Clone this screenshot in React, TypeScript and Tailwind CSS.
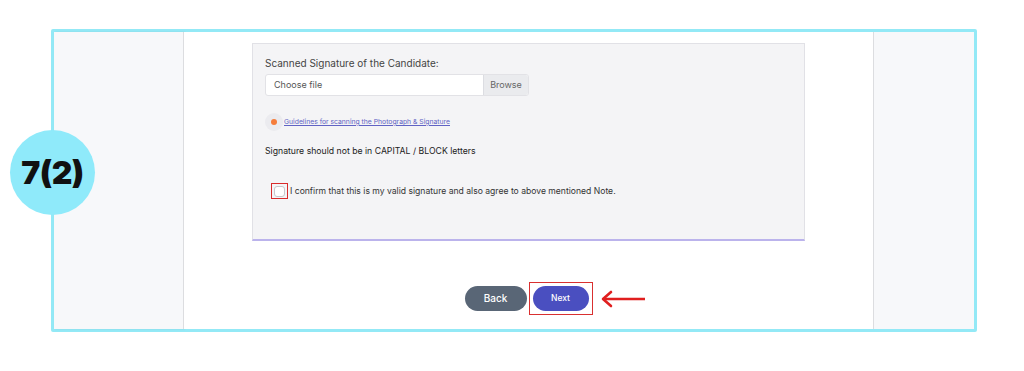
import React from "react";

export default function App() {
  return (
    <div className="relative w-[1024px] h-[371px] bg-white overflow-hidden" style={{ fontFamily: "Inter, 'Liberation Sans', sans-serif" }}>
      <div className="absolute left-[51px] top-[29px] w-[926px] h-[303px] border-[3px] border-[#93e9f6] rounded-[2px] flex">
        <div className="w-[130px] h-full bg-[#f7f8fa] border-r border-[#dcdde0] shadow-[1px_0_2px_rgba(0,0,0,0.08)]" />
        <div className="flex-1 h-full bg-white flex flex-col items-center">
          <div className="mt-[11px] w-[553px] h-[198px] bg-[#f4f4f6] border border-[#e1e1e6] border-b-2 border-b-[#bbb3ec] pl-[12px] pt-[11px] flex flex-col">
            <div className="text-[10px] text-[#444] leading-[16px]">Scanned Signature of the Candidate:</div>
            <div className="mt-[3px] flex w-[264px] h-[22px] border border-[#e2e2e6] rounded-[3px] bg-white overflow-hidden">
              <div className="flex-1 text-[9px] text-[#555] flex items-center pl-[8px]">Choose file</div>
              <div className="w-[45px] bg-[#eaebee] border-l border-[#dcdde2] text-[9px] text-[#666] flex items-center justify-center">Browse</div>
            </div>
            <div className="mt-[17px] flex items-center">
              <div className="w-[18px] h-[18px] rounded-full bg-[#ebebef] flex items-center justify-center">
                <div className="w-[6px] h-[6px] rounded-full bg-[#f57c3a]" />
              </div>
              <a className="ml-[1px] text-[6.8px] text-[#6063c4] underline">Guidelines for scanning the Photograph &amp; Signature</a>
            </div>
            <div className="mt-[13px] text-[8.7px] text-[#222] leading-[14px]">Signature should not be in CAPITAL / BLOCK letters</div>
            <div className="mt-[25px] ml-[6px] flex items-center">
              <div className="w-[17px] h-[16px] border border-[#d92b2b] flex items-center justify-center">
                <div className="w-[11px] h-[11px] rounded-[3px] bg-white border border-[#c8c8cc]" />
              </div>
              <span className="ml-[2px] text-[8.6px] text-[#333]">I confirm that this is my valid signature and also agree to above mentioned Note.</span>
            </div>
          </div>
          <div className="mt-[41px] flex items-center gap-[2px] ml-[0px]">
            <button className="w-[62px] h-[25px] rounded-full bg-[#596676] text-white text-[10px] font-medium">Back</button>
            <div className="relative border border-[#d93030] p-[3px]">
              <button className="w-[56px] h-[25px] rounded-full bg-[#4a4fc0] text-white text-[8.5px] font-medium block">Next</button>
              <svg className="absolute left-[70px] top-[7px]" width="46" height="18" viewBox="0 0 46 18">
                <path d="M45 9 H4" stroke="#e01f1f" strokeWidth="2.6" fill="none" />
                <path d="M11 2 L3 9 L11 16" stroke="#e01f1f" strokeWidth="2.6" fill="none" strokeLinecap="round" strokeLinejoin="round" />
              </svg>
            </div>
          </div>
        </div>
        <div className="w-[101px] h-full bg-[#f7f8fa] border-l border-[#dcdde0]" />
      </div>
      <div className="absolute left-[10px] top-[130px] w-[85px] h-[85px] rounded-full bg-[#8feafa] flex items-center justify-center">
        <span className="text-[32px] font-black text-[#111] tracking-[-0.5px]">7(2)</span>
      </div>
    </div>
  );
}
